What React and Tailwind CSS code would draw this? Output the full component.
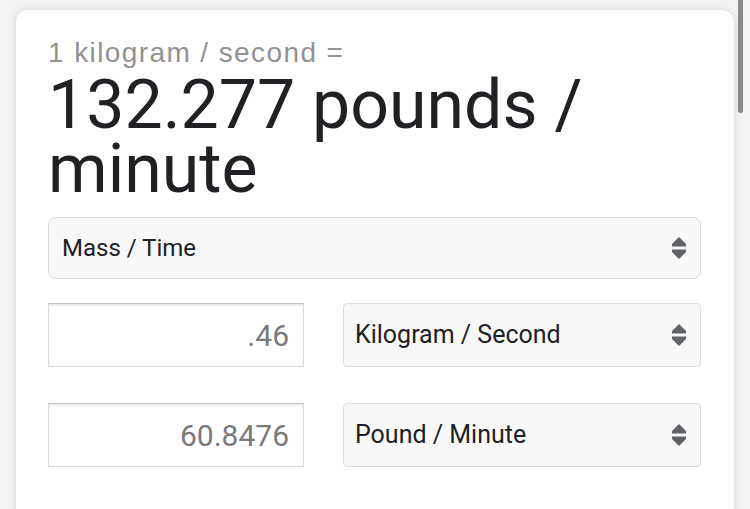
import React from 'react'

const Arrows = () => (
  <svg width="14" height="22" viewBox="0 0 14 22" className="shrink-0">
    <polygon points="7,0 14,7 14,9.5 0,9.5 0,7" fill="#5f6368" />
    <polygon points="0,12.5 14,12.5 14,15 7,22 0,15" fill="#5f6368" />
  </svg>
)

const Select = ({ label, rounded = 'rounded-[4px]' }) => (
  <div className={`flex h-[64px] flex-1 items-center justify-between border border-[#dadce0] bg-[#f8f8f8] pl-[11px] pr-[14px] ${rounded}`}>
    <span className="text-[25px] text-[#202124]">{label}</span>
    <Arrows />
  </div>
)

const ValueBox = ({ value }) => (
  <div className="flex h-[64px] w-[256px] shrink-0 items-center justify-end border border-[#dcdcdc] border-t-[#c4c4c4] bg-white pr-[14px] shadow-[inset_0_2px_2px_rgba(0,0,0,0.08)]">
    <span className="text-[30px] text-[#7a7a7a]">{value}</span>
  </div>
)

export default function App() {
  return (
    <div className="relative h-[509px] w-[750px] overflow-hidden bg-[#f3f3f3] pl-[16px] pr-[16px] pt-[10px] font-['Roboto',sans-serif]">
      <div className="h-[520px] rounded-t-[12px] bg-white pl-[32px] pr-[33px] pt-[27px] shadow-[0_0_8px_rgba(0,0,0,0.12)]">
        <div className="font-['Liberation_Sans',Arial,sans-serif] text-[28px] leading-[32px] tracking-[1.4px] text-[#929292]">
          1 kilogram / second =
        </div>
        <div className="mt-[4px] text-[68px] leading-[64px] text-[#202124]">
          132.277 pounds / minute
        </div>
        <div className="mt-[16px] flex">
          <div className="flex h-[62px] flex-1 items-center justify-between rounded-[8px] border border-[#dadce0] bg-[#f8f8f8] pl-[13px] pr-[14px]">
            <span className="text-[24px] text-[#202124]">Mass / Time</span>
            <Arrows />
          </div>
        </div>
        <div className="mt-[24px] flex gap-[39px]">
          <ValueBox value=".46" />
          <Select label="Kilogram / Second" />
        </div>
        <div className="mt-[36px] flex gap-[39px]">
          <ValueBox value="60.8476" />
          <Select label="Pound / Minute" />
        </div>
      </div>
      <div className="absolute right-[7px] top-0 h-[113px] w-[5px] rounded-b-full bg-[#8b8b8b]" />
    </div>
  )
}
